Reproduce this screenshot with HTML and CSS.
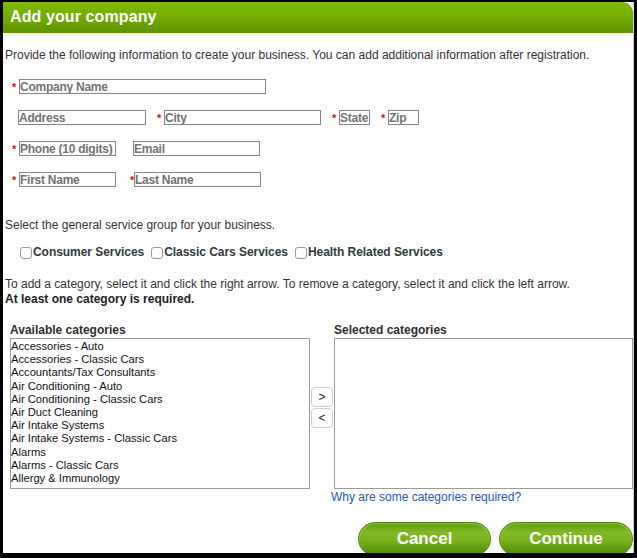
FILE: index.html
```html
<!DOCTYPE html>
<html>
<head>
<meta charset="utf-8">
<title>Add your company</title>
<link rel="stylesheet" href="styles.css">
</head>
<body>
<div class="panel">
  <div class="header"><h1 class="title">Add your company</h1></div>
  <div class="content">
    <p class="intro">Provide the following information to create your business. You can add additional information after registration.</p>

    <div class="fields">
      <div class="row">
        <span class="fld"><span class="star">*</span><input class="inp w-company" placeholder="Company Name"></span>
      </div>
      <div class="row row-addr">
        <span class="fld nostar"><input class="inp w-address" placeholder="Address"></span>
        <span class="fld"><span class="star">*</span><input class="inp w-city" placeholder="City"></span>
        <span class="fld"><span class="star">*</span><input class="inp w-state" placeholder="State"></span>
        <span class="fld"><span class="star">*</span><input class="inp w-zip" placeholder="Zip"></span>
      </div>
      <div class="row row-phone">
        <span class="fld"><span class="star">*</span><input class="inp w-phone" placeholder="Phone (10 digits)"></span>
        <span class="fld"><input class="inp w-email" placeholder="Email"></span>
      </div>
      <div class="row row-name">
        <span class="fld"><span class="star">*</span><input class="inp w-first" placeholder="First Name"></span>
        <span class="fld"><span class="star star-tight">*</span><input class="inp w-last" placeholder="Last Name"></span>
      </div>
    </div>

    <p class="text sel">Select the general service group for your business.</p>

    <div class="groups">
      <label class="grp"><span class="cb"></span>Consumer Services</label>
      <label class="grp"><span class="cb"></span>Classic Cars Services</label>
      <label class="grp"><span class="cb"></span>Health Related Services</label>
    </div>

    <p class="text help">To add a category, select it and click the right arrow. To remove a category, select it and click the left arrow.<br><b>At least one category is required.</b></p>

    <div class="cats">
      <div class="cat-label">Available categories</div>
      <div></div>
      <div class="cat-label">Selected categories</div>

      <div class="list">
        <div class="item">Accessories - Auto</div>
        <div class="item">Accessories - Classic Cars</div>
        <div class="item">Accountants/Tax Consultants</div>
        <div class="item">Air Conditioning - Auto</div>
        <div class="item">Air Conditioning - Classic Cars</div>
        <div class="item">Air Duct Cleaning</div>
        <div class="item">Air Intake Systems</div>
        <div class="item">Air Intake Systems - Classic Cars</div>
        <div class="item">Alarms</div>
        <div class="item">Alarms - Classic Cars</div>
        <div class="item">Allergy &amp; Immunology</div>
      </div>
      <div class="arrows">
        <button class="arrow">&gt;</button>
        <button class="arrow">&lt;</button>
      </div>
      <div class="list list-right"></div>

      <div></div>
      <div></div>
      <a class="why" href="#">Why are some categories required?</a>
    </div>

    <div class="actions">
      <button class="pill pill-cancel">Cancel</button>
      <button class="pill pill-continue">Continue</button>
    </div>
  </div>
</div>
</body>
</html>
```

FILE: styles.css
```css
html, body {
  margin: 0;
  padding: 0;
  background: #000;
}
body {
  font-family: "Liberation Sans", Arial, Helvetica, sans-serif;
  font-size: 12px;
  color: #333;
}
.panel {
  box-sizing: border-box;
  margin: 2px 0 0 3px;
  width: 631px;
  height: 551px;
  background: #fff;
  border-right: 1px solid #cfcfcf;
  overflow: hidden;
}
.header {
  height: 31px;
  display: flex;
  align-items: center;
  padding-left: 7px;
  background: linear-gradient(to bottom, #7fbb00 0%, #70a900 55%, #5c9300 100%);
  border-top-right-radius: 11px;
}
.title {
  margin: -1px 0 0 0;
  font-size: 16px;
  font-weight: bold;
  color: #fff;
  letter-spacing: 0.1px;
}
.content {
  padding: 0 0 0 2px;
}
.intro {
  margin: 15px 0 0 0;
  line-height: 15px;
}
.fields {
  margin-top: 16px;
  display: flex;
  flex-direction: column;
  gap: 16px;
  padding-left: 7px;
}
.row {
  display: flex;
  align-items: center;
  height: 15px;
}
.row-addr { gap: 11px; }
.row-phone { gap: 17px; }
.row-name { gap: 14px; }
.fld {
  display: flex;
  align-items: center;
}
.nostar { margin-left: 6px; }
.star {
  width: 7px;
  color: #e01010;
  font-size: 11px;
  font-weight: bold;
  line-height: 15px;
  height: 15px;
  margin-top: 2px;
}
.star-tight { width: 4px; }
.inp {
  box-sizing: border-box;
  height: 15px;
  margin: 0;
  padding: 0;
  border: 1px solid #858585;
  font-family: "Liberation Sans", Arial, Helvetica, sans-serif;
  font-size: 12px;
  font-weight: bold;
  letter-spacing: -0.25px;
  color: #727272;
  background: #fff;
  outline: none;
}
.inp::placeholder {
  color: #727272;
  opacity: 1;
}
.w-company { width: 247px; }
.w-address { width: 128px; }
.w-city { width: 157px; }
.w-state { width: 31px; }
.w-zip { width: 31px; }
.w-phone { width: 97px; }
.w-email { width: 127px; }
.w-first { width: 97px; }
.w-last { width: 127px; }

.text {
  margin: 0;
  line-height: 15px;
}
.sel { margin-top: 31px; }
.groups {
  margin-top: 12px;
  display: flex;
  align-items: center;
  gap: 7px;
  padding-left: 15px;
  line-height: 15px;
}
.grp {
  display: flex;
  align-items: center;
  font-weight: bold;
  letter-spacing: -0.05px;
  color: #2f3a40;
}
.cb {
  box-sizing: border-box;
  width: 12px;
  height: 12px;
  border: 1px solid #9a9a9a;
  border-radius: 3px;
  background: #fff;
  margin-right: 1px;
}
.help { margin-top: 17px; }
.help b { color: #222; }

.cats {
  margin-top: 14px;
  margin-left: 5px;
  display: grid;
  grid-template-columns: 300px 22px 299px;
  column-gap: 1px;
}
.cat-label {
  font-weight: bold;
  line-height: 15px;
  height: 17px;
  padding-top: 2px;
  box-sizing: border-box;
  color: #2e2e2e;
}
.list {
  box-sizing: border-box;
  height: 151px;
  border: 1px solid #9b9b9b;
  padding: 1px 0 0 0;
  background: #fff;
  overflow: hidden;
}
.item {
  font-size: 11.2px;
  line-height: 13.2px;
  color: #111;
  white-space: nowrap;
}
.arrows {
  margin-top: 49px;
  display: flex;
  flex-direction: column;
  gap: 1px;
}
.arrow {
  box-sizing: border-box;
  width: 22px;
  height: 20px;
  margin: 0;
  padding: 0;
  border: 1px solid #cfcfcf;
  border-radius: 4px;
  background: #fff;
  font-family: "Liberation Sans", Arial, sans-serif;
  font-size: 12px;
  color: #222;
  line-height: 18px;
}
.why {
  margin: 1px 0 0 -3px;
  line-height: 15px;
  color: #2456b8;
  text-decoration: none;
}

.actions {
  margin-top: 17px;
  display: flex;
  justify-content: flex-end;
  gap: 8px;
}
.pill {
  box-sizing: border-box;
  height: 34px;
  margin: 0;
  padding: 0;
  border: 1px solid #4d8a05;
  border-radius: 17px;
  background: linear-gradient(to bottom, #5d9a0a 0%, #80b924 30%, #78b21c 55%, #5e9b0c 80%, #4c8705 100%);
  box-shadow: inset 0 1px 2px rgba(255,255,255,0.35);
  font-family: "Liberation Sans", Arial, sans-serif;
  font-size: 17px;
  font-weight: bold;
  color: #fff;
}
.pill-cancel { width: 133px; }
.pill-continue { width: 134px; }
```
